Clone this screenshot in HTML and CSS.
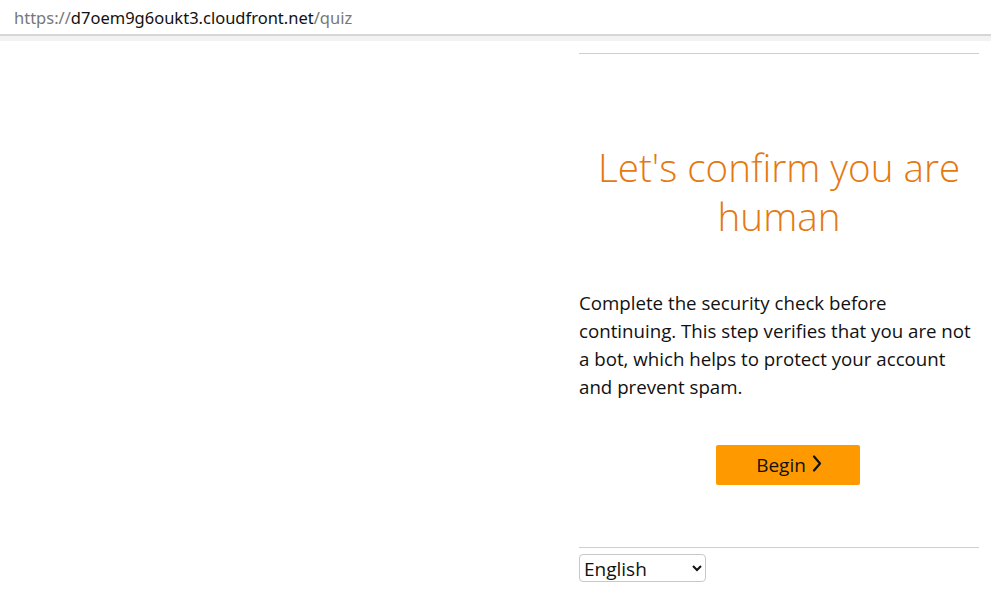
FILE: index.html
```html
<!DOCTYPE html>
<html lang="en">
<head>
<meta charset="utf-8">
<title>Quiz</title>
<link rel="stylesheet" href="styles.css">
</head>
<body>
<header class="urlbar">
  <span class="url"><span class="dim">https://</span>d7oem9g6oukt3.cloudfront.net<span class="dim">/quiz</span></span>
</header>
<div class="strip"></div>
<main class="page">
  <section class="panel">
    <hr class="rule">
    <h1 class="title">Let's confirm you are human</h1>
    <p class="desc">Complete the security check before continuing. This step verifies that you are not a bot, which helps to protect your account and prevent spam.</p>
    <div class="actions">
      <button class="begin" type="button">Begin <svg class="chev" width="10" height="17" viewBox="0 0 10 17"><path d="M2 1.5 L8 8.5 L2 15.5" fill="none" stroke="#111" stroke-width="2.2" stroke-linecap="round" stroke-linejoin="round"/></svg></button>
    </div>
    <hr class="rule bottom">
    <select class="lang">
      <option>English</option>
    </select>
  </section>
</main>
</body>
</html>
```
FILE: styles.css
```css
* { box-sizing: border-box; }
html, body { margin: 0; padding: 0; background: #fff; }
body { font-family: "Open Sans", "Noto Sans", sans-serif; color: #111; }

.urlbar {
  height: 36px;
  display: flex;
  align-items: center;
  padding-left: 14px;
  padding-top: 1px;
  border-bottom: 2px solid #d6d6d6;
  background: #fff;
}
.url { font-family: "Noto Sans", "Open Sans", sans-serif; font-size: 16.5px; color: #111; }
.url .dim { color: #777; }
.strip { height: 5px; background: #f2f2f2; }

.page {
  display: flex;
  justify-content: flex-end;
  padding-right: 12px;
}
.panel { width: 400px; display: flex; flex-direction: column; }
.rule { border: 0; border-top: 1px solid #cfcfcf; margin: 12px 0 0; height: 0; }
.title {
  margin: 89px 0 0;
  text-align: center;
  color: #e47911;
  font-weight: 300;
  font-size: 38.6px;
  line-height: 49px;
}
.desc {
  margin: 48px 0 0;
  font-size: 18.7px;
  line-height: 28px;
  color: #111;
}
.actions { display: flex; justify-content: center; margin-top: 44px; padding-left: 18px; }
.begin {
  width: 144px;
  height: 40px;
  border: 0;
  border-radius: 2px;
  background: #ff9900;
  font-family: "Open Sans", "Noto Sans", sans-serif;
  font-size: 19px;
  font-weight: 500;
  color: #111;
  display: flex;
  align-items: center;
  justify-content: center;
  gap: 6px;
  padding: 0 0 0 2px;
}
.chev { margin-top: -4px; }
.rule.bottom { margin-top: 62px; }
.lang {
  margin-top: 6px;
  width: 127px;
  height: 28px;
  border: 1px solid #c8c8c8;
  border-radius: 4px;
  background: #fff;
  font-family: "Open Sans", "Noto Sans", sans-serif;
  font-size: 19px;
  color: #111;
  padding: 0;
}
```
